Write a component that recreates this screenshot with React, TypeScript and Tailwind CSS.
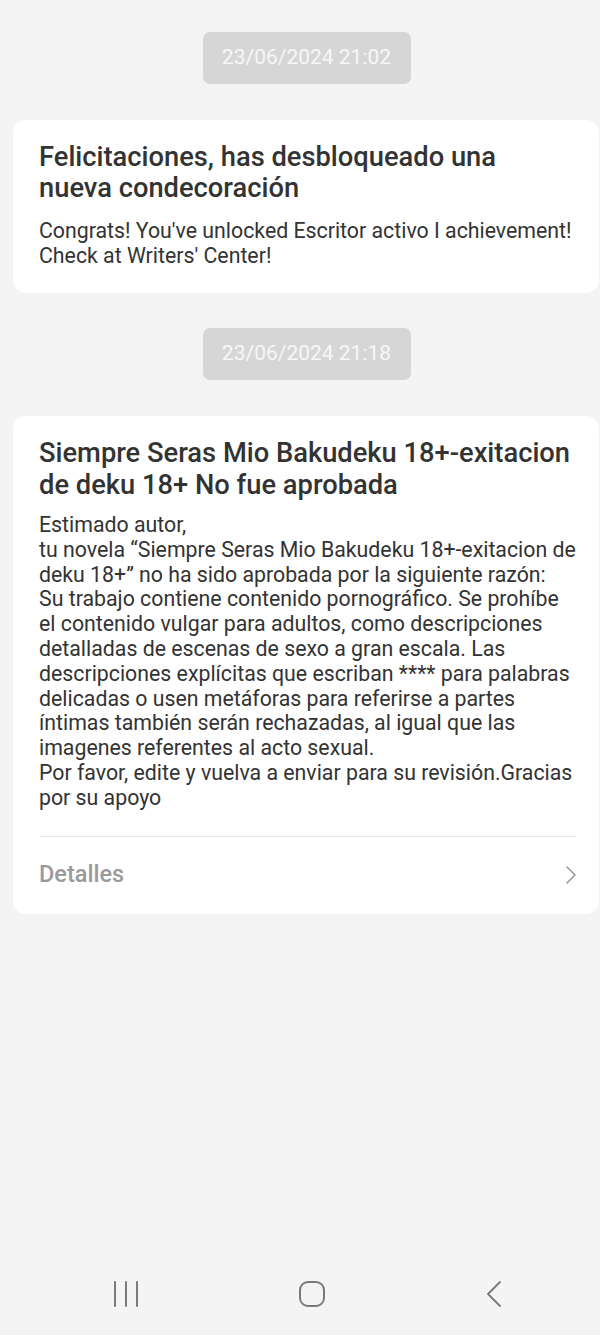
import React from "react";

function Stamp({ text }: { text: string }) {
  return (
    <div className="flex justify-center ml-[13px]">
      <div className="h-[52px] w-[208px] rounded-[7px] bg-[#d6d6d6] flex items-center justify-center text-[21px] text-[#f7f7f7]">
        {text}
      </div>
    </div>
  );
}

function Lines({ lines }: { lines: string[] }) {
  return (
    <>
      {lines.map((l, i) => (
        <div key={i} className="whitespace-nowrap">
          {l}
        </div>
      ))}
    </>
  );
}

export default function App() {
  return (
    <div
      className="w-[600px] h-[1335px] bg-[#f4f4f4] flex flex-col overflow-hidden"
      style={{ fontFamily: "Roboto, 'Noto Sans', sans-serif" }}
    >
      <div className="flex-1 flex flex-col pt-[32px]">
        <Stamp text="23/06/2024 21:02" />
        <div className="mt-[36px] ml-[13px] mr-[1px] rounded-[13px] bg-white pl-[26px] pr-[23px] pt-[22px] pb-[25px]">
          <div className="text-[27.3px] leading-[31px] font-medium text-[#333333]">
            <Lines lines={["Felicitaciones, has desbloqueado una", "nueva condecoración"]} />
          </div>
          <div className="mt-[14px] text-[21.3px] leading-[25px] text-[#333333]">
            <Lines lines={["Congrats! You've unlocked Escritor activo I achievement!", "Check at Writers' Center!"]} />
          </div>
        </div>
        <div className="mt-[35px]">
          <Stamp text="23/06/2024 21:18" />
        </div>
        <div className="mt-[36px] ml-[13px] mr-[1px] rounded-[13px] bg-white pl-[26px] pr-[23px] pt-[21px]">
          <div className="text-[27.3px] leading-[32px] font-medium text-[#333333]">
            <Lines lines={["Siempre Seras Mio Bakudeku 18+-exitacion", "de deku 18+ No fue aprobada"]} />
          </div>
          <div className="mt-[12px] text-[21.3px] leading-[24.8px] text-[#333333]">
            <Lines
              lines={[
                "Estimado autor,",
                "tu novela “Siempre Seras Mio Bakudeku 18+-exitacion de",
                "deku 18+” no ha sido aprobada por la siguiente razón:",
                "Su trabajo contiene contenido pornográfico. Se prohíbe",
                "el contenido vulgar para adultos, como descripciones",
                "detalladas de escenas de sexo a gran escala. Las",
                "descripciones explícitas que escriban **** para palabras",
                "delicadas o usen metáforas para referirse a partes",
                "íntimas también serán rechazadas, al igual que las",
                "imagenes referentes al acto sexual.",
                "Por favor, edite y vuelva a enviar para su revisión.Gracias",
                "por su apoyo",
              ]}
            />
          </div>
          <div className="mt-[25px] h-px bg-[#e8e8e8]" />
          <div className="h-[77px] flex items-center justify-between">
            <span className="text-[23.5px] font-medium text-[#9a9a9a]">Detalles</span>
            <svg width="14" height="22" viewBox="0 0 14 22" className="mr-[-2px]">
              <path d="M3 3 L11 11 L3 19" fill="none" stroke="#9a9a9a" strokeWidth="1.6" strokeLinecap="round" strokeLinejoin="round" />
            </svg>
          </div>
        </div>
      </div>
      <div className="h-[80px] flex items-center justify-between pl-[113px] pr-[98px] pb-[2px]">
        <svg width="26" height="26" viewBox="0 0 26 26">
          <path d="M2 1 V25 M13 1 V25 M24 1 V25" stroke="#7a7a7a" strokeWidth="2" strokeLinecap="round" />
        </svg>
        <svg width="28" height="28" viewBox="0 0 28 28">
          <rect x="2" y="2" width="24" height="24" rx="8" fill="none" stroke="#7a7a7a" strokeWidth="2" />
        </svg>
        <svg width="17" height="28" viewBox="0 0 17 28">
          <path d="M15 2 L3 14 L15 26" fill="none" stroke="#7a7a7a" strokeWidth="1.8" strokeLinecap="round" strokeLinejoin="round" />
        </svg>
      </div>
    </div>
  );
}
